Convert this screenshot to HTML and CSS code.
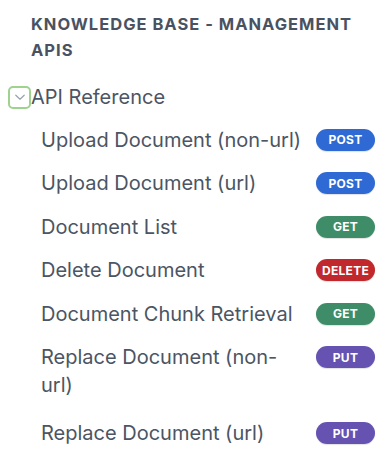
FILE: index.html
```html
<!DOCTYPE html>
<html lang="en">
<head>
<meta charset="utf-8">
<title>Knowledge Base - Management APIs</title>
<link rel="stylesheet" href="styles.css">
</head>
<body>
<nav class="sidebar">
  <h2 class="section-title">Knowledge Base - Management APIs</h2>
  <div class="group">
    <div class="group-head">
      <span class="toggle">
        <svg width="12" height="12" viewBox="0 0 12 12" aria-hidden="true"><path d="M1.8 4.2 L6 8.2 L10.2 4.2" fill="none" stroke="#9aa1ab" stroke-width="1.2" stroke-linecap="round" stroke-linejoin="round"/></svg>
      </span>
      <span class="group-label">API Reference</span>
    </div>
    <ul class="items">
      <li class="item"><span class="label">Upload Document (non-url)</span><span class="badge post">POST</span></li>
      <li class="item"><span class="label">Upload Document (url)</span><span class="badge post">POST</span></li>
      <li class="item"><span class="label">Document List</span><span class="badge get">GET</span></li>
      <li class="item"><span class="label">Delete Document</span><span class="badge delete">DELETE</span></li>
      <li class="item"><span class="label">Document Chunk Retrieval</span><span class="badge get">GET</span></li>
      <li class="item item-wrap"><span class="label">Replace Document (non-url)</span><span class="badge put">PUT</span></li>
      <li class="item"><span class="label">Replace Document (url)</span><span class="badge put">PUT</span></li>
    </ul>
  </div>
</nav>
</body>
</html>
```
FILE: styles.css
```css
* { box-sizing: border-box; }
html, body { margin: 0; padding: 0; background: #ffffff; }
body {
  font-family: Inter, "Noto Sans", "Liberation Sans", sans-serif;
  color: #4b5563;
}
.sidebar {
  width: 390px;
  padding: 11px 15px 0 8px;
}
.section-title {
  margin: 0;
  padding-left: 23px;
  padding-right: 20px;
  font-size: 16.5px;
  line-height: 26px;
  font-weight: 700;
  letter-spacing: 1px;
  text-transform: uppercase;
  color: #4a5261;
}
.group { margin-top: 22px; }
.group-head {
  display: flex;
  align-items: center;
  height: 24px;
}
.toggle {
  width: 23px;
  height: 23px;
  border: 2px solid #9fd28e;
  border-radius: 5px;
  display: flex;
  align-items: center;
  justify-content: center;
}
.group-label {
  font-size: 20px;
  line-height: 24px;
  color: #4b5563;
}
.items {
  list-style: none;
  margin: 9px 0 0;
  padding: 0 0 0 33px;
}
.item {
  display: flex;
  justify-content: space-between;
  align-items: flex-start;
  gap: 12px;
  padding: 7.75px 0;
}
.item-wrap { padding-bottom: 12px; }
.label {
  font-size: 20px;
  line-height: 28px;
  color: #4b5563;
}
.badge {
  flex: none;
  width: 59px;
  height: 22px;
  margin-top: 3px;
  border-radius: 11px;
  color: #ffffff;
  font-size: 12px;
  font-weight: 700;
  letter-spacing: 0.3px;
  display: flex;
  align-items: center;
  justify-content: center;
  box-shadow: 0 1px 1px rgba(0,0,0,0.12);
}
.post { background: #2f69d4; }
.get { background: #3e8d68; }
.delete { background: #c1282d; }
.put { background: #6552b1; }
```
